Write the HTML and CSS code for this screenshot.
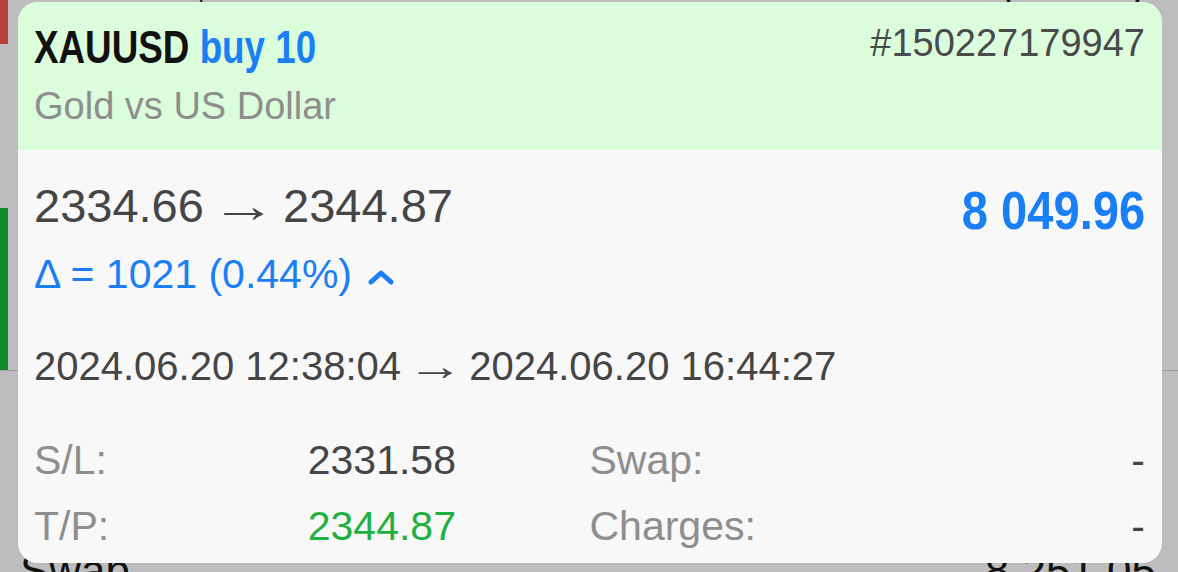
FILE: index.html
```html
<html>
	<head>
		<link rel="stylesheet" href="styles.css">
	</head>
	<body>
		<div id="screen">
			<div class="list">
				<div class="row row-first">
					<div class="bar bar-sell"></div>
					<div class="row-text">
						<span>XAUUSD, sell 10.00</span>
						<span>2024.06.20 12:31:17 (closed)</span>
					</div>
				</div>
				<div class="row row-gap"></div>
				<div class="row row-buy">
					<div class="bar bar-buy"></div>
				</div>
				<div class="row row-summary">
					<span>Swap</span>
					<span>8 251.05</span>
				</div>
			</div>

			<div class="card">
				<div class="card-head">
					<div class="head-top">
						<div class="title">XAUUSD <span class="side">buy 10</span></div>
						<div class="ticket">#150227179947</div>
					</div>
					<div class="subtitle">Gold vs US Dollar</div>
				</div>
				<div class="card-body">
					<div class="price-row">
						<div class="price-col">
							<div class="prices">2334.66 <span class="arrow">&rarr;</span> 2344.87</div>
							<div class="delta">&Delta; = 1021 (0.44%)
								<svg class="caret" width="28" height="16" viewBox="0 0 28 16">
									<polyline points="4,13 14,4 24,13" fill="none" stroke="#1a7ff5" stroke-width="5" stroke-linecap="round" stroke-linejoin="round" />
								</svg>
							</div>
						</div>
						<div class="profit">8 049.96</div>
					</div>
					<div class="times">2024.06.20 12:38:04 <span class="arrow">&rarr;</span> 2024.06.20 16:44:27</div>
					<div class="details">
						<span class="label">S/L:</span>
						<span class="value">2331.58</span>
						<span class="label">Swap:</span>
						<span class="value right">-</span>
						<span class="label">T/P:</span>
						<span class="value green">2344.87</span>
						<span class="label">Charges:</span>
						<span class="value right">-</span>
					</div>
				</div>
			</div>
		</div>
	</body>
</html>
```

FILE: styles.css
```css
body {
	padding: 0;
	margin: 0;
	background-color: #bdbdbd;
	font-family: "Liberation Sans", Arial, sans-serif;
	}

#screen {
	position: relative;
	width: 1178px;
	height: 572px;
	overflow: hidden;
	}

/* list behind the popup */
.list {
	display: flex;
	flex-direction: column;
	}

.row {
	display: flex;
	}

.bar {
	width: 8px;
	}

.row-first {
	height: 44px;
	}

.bar-sell {
	background-color: #b5433b;
	}

.row-text {
	flex: 1;
	display: flex;
	justify-content: space-between;
	margin: -36px 34px 0 20px;
	font-size: 40px;
	line-height: 44px;
	color: #111;
	}

.row-gap {
	height: 164px;
	}

.row-buy {
	height: 162px;
	border-bottom: 1px solid #9e9e9e;
	}

.bar-buy {
	background-color: #138a2a;
	}

.row-summary {
	justify-content: space-between;
	padding: 176px 22px 0 20px;
	font-size: 44px;
	line-height: 48px;
	color: #111;
	}

/* popup card */
.card {
	position: absolute;
	top: 2px;
	left: 18px;
	width: 1144px;
	height: 561px;
	border-radius: 20px;
	overflow: hidden;
	background-color: #f8f8f8;
	}

.card-head {
	background-color: #dcfddb;
	padding: 19px 17px 22px 16px;
	}

.head-top {
	display: flex;
	justify-content: space-between;
	align-items: flex-start;
	}

.title {
	display: inline-block;
	transform: scaleX(0.8);
	transform-origin: left center;
	white-space: nowrap;
	font-weight: bold;
	font-size: 46px;
	line-height: 52px;
	color: #111;
	}

.side {
	color: #1a7ff5;
	}

.ticket {
	font-size: 38px;
	line-height: 44px;
	color: #4a4a4a;
	}

.subtitle {
	margin-top: 11px;
	font-size: 38px;
	line-height: 44px;
	color: #8e8e8e;
	}

.card-body {
	padding: 29px 17px 0 16px;
	}

.price-row {
	display: flex;
	justify-content: space-between;
	align-items: flex-start;
	}

.prices {
	font-size: 47px;
	line-height: 54px;
	color: #454545;
	}

.arrow {
	display: inline-block;
	transform: scaleX(1.4);
	margin: 0 3px;
	}

.delta {
	margin-top: 17px;
	font-size: 41px;
	line-height: 48px;
	color: #1a7ff5;
	}

.caret {
	margin-left: 4px;
	vertical-align: 3px;
	}

.profit {
	display: inline-block;
	transform: scaleX(0.89);
	transform-origin: right center;
	white-space: nowrap;
	margin-top: 2px;
	font-weight: bold;
	font-size: 53px;
	line-height: 60px;
	color: #1a7ff5;
	}

.times {
	margin-top: 45px;
	font-size: 40px;
	line-height: 46px;
	color: #454545;
	}

.times .arrow {
	margin: 0 3px;
	}

.details {
	margin-top: 38px;
	display: grid;
	grid-template-columns: 1fr 1fr 1fr 1fr;
	font-size: 41px;
	line-height: 66px;
	}

.label {
	color: #8e8e8e;
	}

.value {
	margin-left: -4px;
	color: #454545;
	}

.green {
	color: #1fb140;
	}

.right {
	text-align: right;
	}
```
